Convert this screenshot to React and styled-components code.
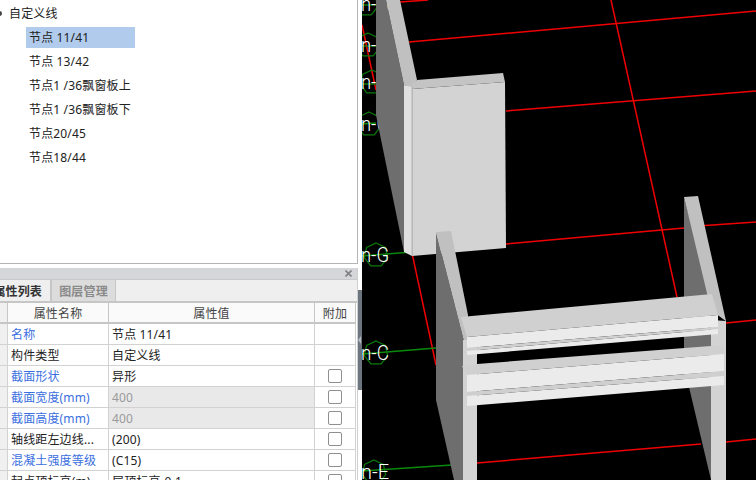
import React from "react";
import styled, { createGlobalStyle } from "styled-components";

const GlobalStyle = createGlobalStyle`
  html, body {
    margin: 0;
    padding: 0;
    background: #fff;
  }
`;

const Page = styled.div`
  display: flex;
  width: 756px;
  height: 480px;
  overflow: hidden;
  font-family: "Noto Sans", "Noto Sans CJK SC", sans-serif;
  font-size: 12px;
  letter-spacing: 0.15px;
  color: #222;
`;

const LeftColumn = styled.div`
  position: relative;
  flex: none;
  width: 362px;
  height: 480px;
  overflow: hidden;
  background: #fff;
`;

const TreePanel = styled.div`
  box-sizing: border-box;
  width: 358px;
  height: 264px;
  padding-top: 1px;
  border-right: 1px solid #b4b4b4;
  border-bottom: 1px solid #b4b4b4;
`;

const TreeRoot = styled.div`
  display: flex;
  align-items: center;
  height: 24px;
  margin-bottom: 2px;
  padding-left: 9px;
  position: relative;
`;

const Toggle = styled.span`
  position: absolute;
  left: -3px;
  top: 10px;
  width: 5px;
  height: 5px;
  border-radius: 50%;
  background: #444;
`;

const TreeList = styled.div`
  display: flex;
  flex-direction: column;
  padding-left: 26px;
`;

const TreeItem = styled.div`
  display: flex;
  align-items: center;
  box-sizing: border-box;
  width: 109px;
  height: 21px;
  margin-bottom: 3px;
  padding: 0 0 2px 3px;
  white-space: nowrap;
  background: ${({ $selected }) => ($selected ? "#b1cbec" : "transparent")};
`;

const PropertyPanel = styled.div`
  box-sizing: border-box;
  width: 358px;
  margin-top: 4px;
  border-right: 1px solid #cfcfcf;
`;

const PanelHeader = styled.div`
  display: flex;
  align-items: center;
  justify-content: flex-end;
  box-sizing: border-box;
  height: 12px;
  padding-right: 5px;
  background: #d4d6da;
  border-bottom: 1px solid #c8c8c8;
`;

const CloseIcon = styled.svg`
  width: 7px;
  height: 7px;
`;

const TabBar = styled.div`
  display: flex;
  box-sizing: border-box;
  height: 23px;
  background: #efeff0;
  border-bottom: 2px solid #c6c6c6;
`;

const Tab = styled.div`
  display: flex;
  align-items: center;
  justify-content: center;
  box-sizing: border-box;
  flex: none;
  font-weight: 700;
  width: ${({ $active }) => ($active ? "51px" : "65px")};
  color: ${({ $active }) => ($active ? "#333" : "#8a8a8a")};
  background: ${({ $active }) => ($active ? "#efeff0" : "#dcdcdc")};
  border-left: ${({ $active }) => ($active ? "none" : "1px solid #c6c6c6")};
  border-right: 1px solid #c6c6c6;
  white-space: nowrap;
  ${({ $active }) => $active && "justify-content: flex-end; padding-right: 8px;"}
`;

const Grid = styled.div`
  display: grid;
  grid-template-columns: 8px 101px 206px 41px;
  grid-auto-rows: 21px;
  width: 357px;
`;

const Cell = styled.div`
  display: flex;
  align-items: center;
  box-sizing: border-box;
  min-width: 0;
  padding-left: 3px;
  white-space: nowrap;
  border-right: 1px solid #d2d2d2;
  border-bottom: 1px solid #d2d2d2;
  color: ${({ $tone }) =>
    $tone === "link" ? "#3b6fe0" : $tone === "muted" ? "#9a9a9a" : "#222"};
  background: ${({ $shaded }) => ($shaded ? "#e9e9e9" : "#fff")};
`;

const HeadCell = styled(Cell)`
  justify-content: center;
  padding-left: 0;
  color: #444;
  background: #fafafa;
  border-right-color: #c6c6c6;
  border-bottom: 2px solid #c6c6c6;
`;

const Stub = styled(Cell)`
  padding: 0;
  background: #f0f0f0;
`;

const CheckCell = styled(Cell)`
  justify-content: center;
  padding: 0;
`;

const CheckBox = styled.span`
  box-sizing: border-box;
  width: 14px;
  height: 14px;
  border: 1px solid #8f8f8f;
  border-radius: 2px;
  background: #fff;
`;

const Splitter = styled.div`
  position: absolute;
  left: 358px;
  top: 290px;
  display: flex;
  align-items: center;
  width: 4px;
  height: 100px;
  background: #6c7580;
`;

const SplitterArrow = styled.span`
  width: 0;
  height: 0;
  border-top: 4px solid transparent;
  border-bottom: 4px solid transparent;
  border-right: 3px solid #b4bac0;
`;

const Viewport = styled.svg`
  display: block;
  flex: none;
  width: 394px;
  height: 480px;
  background: #000;
`;

const AxisLabel = styled.text`
  fill: #fff;
  font-family: Roboto, "Liberation Sans", sans-serif;
  font-size: 20px;
  font-weight: 300;
  letter-spacing: 0;
`;

const treeItems = [
  "节点 11/41",
  "节点 13/42",
  "节点1 /36飘窗板上",
  "节点1 /36飘窗板下",
  "节点20/45",
  "节点18/44",
];

const rows = [
  { name: "名称", value: "节点 11/41", link: true },
  { name: "构件类型", value: "自定义线" },
  { name: "截面形状", value: "异形", link: true, check: true },
  { name: "截面宽度(mm)", value: "400", link: true, check: true, locked: true },
  { name: "截面高度(mm)", value: "400", link: true, check: true, locked: true },
  { name: "轴线距左边线...", value: "(200)", check: true },
  { name: "混凝土强度等级", value: "(C15)", link: true, check: true },
  { name: "起点顶标高(m)", value: "层顶标高-0.1", check: true },
];

const redLines = [
  [400, 2, 428, 0],
  [409, 42, 756, 11],
  [506, 111, 756, 91],
  [506, 244, 684, 228],
  [698, 226, 756, 222],
  [726, 323, 756, 320],
  [477, 463, 701, 444],
  [726, 442, 756, 439],
  [611, 0, 677, 297],
  [362, 25, 376, 90],
  [412, 253, 436, 365],
];

const greenLines = [
  [362, 5, 376, 5],
  [362, 46, 376, 46],
  [362, 84, 376, 84],
  [362, 124, 376, 123],
  [362, 256, 412, 252],
  [362, 354, 436, 348],
  [362, 471, 452, 465],
];

const axes = [
  { x: 366, y: 4, label: "G" },
  { x: 368, y: 45, label: "G" },
  { x: 372, y: 82, label: "G" },
  { x: 369, y: 124, label: "G" },
  { x: 376, y: 255, label: "G" },
  { x: 376, y: 353, label: "C" },
  { x: 374, y: 472, label: "E" },
];

const heptagon = (cx, cy, r) =>
  Array.from({ length: 7 }, (_, i) => {
    const a = (i * 2 * Math.PI) / 7 - Math.PI / 2;
    return `${(cx + r * Math.cos(a)).toFixed(1)},${(cy + r * Math.sin(a)).toFixed(1)}`;
  }).join(" ");

// x, y pairs in screenshot coordinates, painted back to front
const faces = [
  ["#6e6e6e", "376,0 386,0 404,85 404,252 376,115"],
  ["#c0c0c0", "386,0 400,0 417,80 412,88 404,85"],
  ["#e0e0e0", "404,85 412,87 412,256 404,252"],
  ["#c4c4c4", "417,80 503,73 505,82 412,89 412,85"],
  ["#d3d3d3", "412,89 505,82 506,248 412,256"],
  ["#a8a8a8", "411.6,87 412.6,87 412.6,256 411.6,256"],
  ["#6e6e6e", "684,197 711,300 711,480 689,387 684,375"],
  ["#c0c0c0", "684,197 698,196 726,321 711,310"],
  ["#d3d3d3", "711,320 726,321 726,480 711,480"],
  ["#6e6e6e", "436,232 467,353 463,400 463,480 454,480 436,400"],
  ["#c0c0c0", "436,232 451,231 468,315 467,353"],
  ["#d3d3d3", "463,340 477,340 477,480 463,480"],
  ["#d0d0d0", "461,317 712,294 718,315 467,337"],
  ["#c2c2c2", "712,294 726,321 718,315"],
  ["#ebebeb", "467,337 718,315 718,327 467,348"],
  ["#cfcfcf", "467,348 718,327 718,329 467,351"],
  ["#ebebeb", "467,351 718,329 718,334 467,355"],
  ["#d0d0d0", "462,366 477,364 724,345 724,354 467,375"],
  ["#ebebeb", "467,375 724,354 724,371 467,392"],
  ["#cfcfcf", "467,392 724,371 724,376 467,396"],
  ["#ebebeb", "467,396 724,376 724,385 467,406"],
];

const App = () => (
  <Page>
    <GlobalStyle />
    <LeftColumn>
      <TreePanel>
        <TreeRoot>
          <Toggle />
          自定义线
        </TreeRoot>
        <TreeList>
          {treeItems.map((item, i) => (
            <TreeItem key={item} $selected={i === 0}>
              {item}
            </TreeItem>
          ))}
        </TreeList>
      </TreePanel>
      <PropertyPanel>
        <PanelHeader>
          <CloseIcon viewBox="0 0 7 7">
            <path d="M0.5 0.5 L6.5 6.5 M6.5 0.5 L0.5 6.5" stroke="#808080" strokeWidth="1.6" />
          </CloseIcon>
        </PanelHeader>
        <TabBar>
          <Tab $active>属性列表</Tab>
          <Tab>图层管理</Tab>
        </TabBar>
        <Grid>
          <Stub as={HeadCell} />
          <HeadCell>属性名称</HeadCell>
          <HeadCell>属性值</HeadCell>
          <HeadCell>附加</HeadCell>
          {rows.map((row) => (
            <React.Fragment key={row.name}>
              <Stub />
              <Cell $tone={row.link ? "link" : undefined}>{row.name}</Cell>
              <Cell $tone={row.locked ? "muted" : undefined} $shaded={row.locked}>
                {row.value}
              </Cell>
              <CheckCell>{row.check && <CheckBox />}</CheckCell>
            </React.Fragment>
          ))}
        </Grid>
      </PropertyPanel>
      <Splitter>
        <SplitterArrow />
      </Splitter>
    </LeftColumn>
    <Viewport viewBox="362 0 394 480">
      {redLines.map(([x1, y1, x2, y2]) => (
        <line key={`${x1}-${y1}`} x1={x1} y1={y1} x2={x2} y2={y2} stroke="#f00000" strokeWidth="1.5" />
      ))}
      {greenLines.map(([x1, y1, x2, y2]) => (
        <line key={`${x1}-${y1}`} x1={x1} y1={y1} x2={x2} y2={y2} stroke="#0a8a0a" strokeWidth="1.3" />
      ))}
      {axes.map((axis) => (
        <g key={axis.y}>
          <polygon points={heptagon(axis.x, axis.y, 12)} fill="none" stroke="#0a7a0a" strokeWidth="1.2" />
          <AxisLabel x={361} y={axis.y + 7} textLength="28" lengthAdjust="spacingAndGlyphs">
            n-{axis.label}
          </AxisLabel>
        </g>
      ))}
      {faces.map(([fill, points]) => (
        <polygon key={points} points={points} fill={fill} />
      ))}
    </Viewport>
  </Page>
);

export default App;
